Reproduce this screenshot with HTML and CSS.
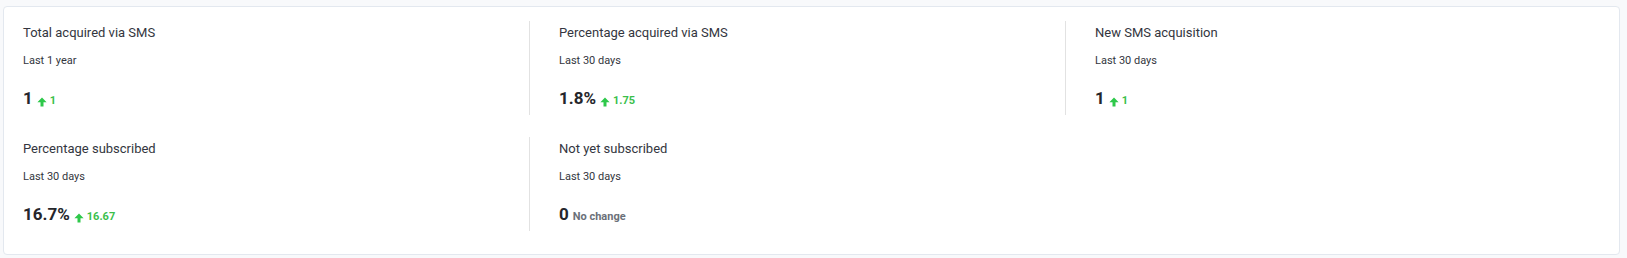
FILE: index.html
```html
<!DOCTYPE html>
<html lang="en">
<head>
<meta charset="utf-8">
<title>SMS metrics</title>
<link rel="stylesheet" href="styles.css">
</head>
<body>
<div class="card">
  <div class="grid">
    <div class="metric">
      <div class="title">Total acquired via SMS</div>
      <div class="period">Last 1 year</div>
      <div class="value-row"><span class="value">1</span><span class="delta up"><svg class="arrow" viewBox="0 0 10 10"><path d="M5 0.6L9.6 5.2H6.5V9.6H3.5V5.2H0.4Z"/></svg>1</span></div>
    </div>
    <div class="metric">
      <div class="title">Percentage acquired via SMS</div>
      <div class="period">Last 30 days</div>
      <div class="value-row"><span class="value">1.8%</span><span class="delta up"><svg class="arrow" viewBox="0 0 10 10"><path d="M5 0.6L9.6 5.2H6.5V9.6H3.5V5.2H0.4Z"/></svg>1.75</span></div>
    </div>
    <div class="metric last">
      <div class="title">New SMS acquisition</div>
      <div class="period">Last 30 days</div>
      <div class="value-row"><span class="value">1</span><span class="delta up"><svg class="arrow" viewBox="0 0 10 10"><path d="M5 0.6L9.6 5.2H6.5V9.6H3.5V5.2H0.4Z"/></svg>1</span></div>
    </div>
    <div class="metric">
      <div class="title">Percentage subscribed</div>
      <div class="period">Last 30 days</div>
      <div class="value-row"><span class="value">16.7%</span><span class="delta up"><svg class="arrow" viewBox="0 0 10 10"><path d="M5 0.6L9.6 5.2H6.5V9.6H3.5V5.2H0.4Z"/></svg>16.67</span></div>
    </div>
    <div class="metric last">
      <div class="title">Not yet subscribed</div>
      <div class="period">Last 30 days</div>
      <div class="value-row"><span class="value">0</span><span class="delta flat">No change</span></div>
    </div>
  </div>
</div>
</body>
</html>
```
FILE: styles.css
```css
* { box-sizing: border-box; }
html, body { margin: 0; }
body {
  background: #f8f9fb;
  padding: 6px 7px 5px 3px;
  font-family: Roboto, "Liberation Sans", Arial, sans-serif;
  color: #2f3138;
}
.card {
  background: #ffffff;
  border: 1px solid #e3e8ef;
  border-radius: 4px;
  padding: 14px 17px 23px 19px;
}
.grid {
  display: grid;
  grid-template-columns: repeat(3, 1fr);
  column-gap: 29px;
  row-gap: 22px;
}
.metric {
  height: 94px;
  padding-top: 2px;
  border-right: 1px solid #e2e2e2;
  display: flex;
  flex-direction: column;
}
.metric.last { border-right: none; }
.title {
  font-size: 13px;
  line-height: 20px;
  color: #333640;
}
.period {
  margin-top: 10px;
  font-size: 11px;
  line-height: 16px;
  color: #333640;
}
.value-row {
  margin-top: 17px;
  display: flex;
  align-items: baseline;
  gap: 4px;
  line-height: 24px;
}
.value {
  font-size: 17px;
  font-weight: 700;
  color: #25262b;
}
.delta {
  font-size: 11px;
  font-weight: 700;
  display: inline-flex;
  align-items: baseline;
  gap: 3px;
}
.delta.up { color: #3bbf4c; }
.delta.flat { color: #6b7079; }
.arrow {
  width: 10px;
  height: 10px;
  fill: #2ec84a;
  align-self: center;
  position: relative;
  top: 1px;
}
```
